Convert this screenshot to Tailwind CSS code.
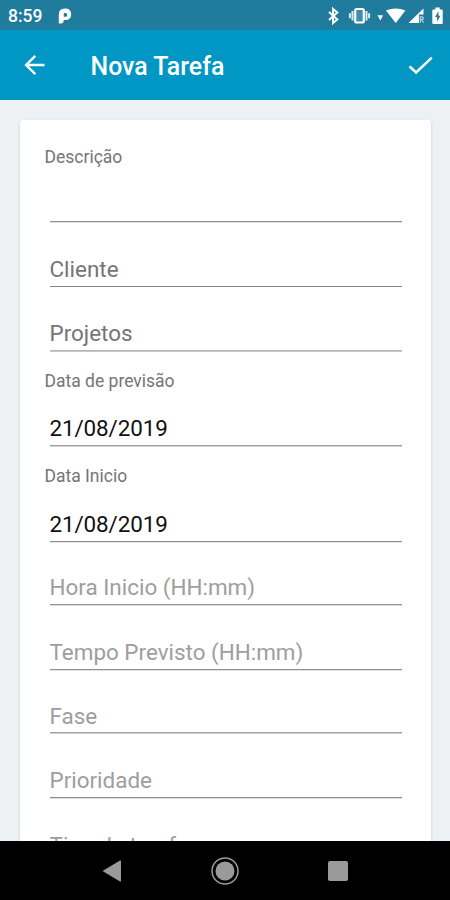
<!DOCTYPE html>
<html lang="pt">
<head>
<meta charset="utf-8">
<title>Nova Tarefa</title>
<script src="https://cdn.jsdelivr.net/npm/@tailwindcss/browser@4"></script>
</head>
<body class="h-[900px] w-[450px] overflow-hidden bg-black font-['Roboto',sans-serif]">
<div class="flex h-full flex-col">
  <div class="flex h-[30px] shrink-0 items-center bg-[#1f7c9c] pt-px pl-2 text-white">
    <span class="w-[50px] text-[17.5px] leading-5 font-medium">8:59</span>
    <svg class="h-4 w-[14px]" viewBox="0 0 14 16"><path fill="#fff" fill-rule="evenodd" d="M.8 15.500V6.800Q.8.500 7 .5Q13.200.5 13.200 6.200Q13.200 12 7.200 12H5.800Q5.600 15.500 3 15.500zM5.800 5V8.800H7.100Q9.300 8.800 9.300 6.900Q9.300 5 7.300 5z"/></svg>
    <svg class="ml-auto h-[30px] w-[130px]" viewBox="320 0 130 30" fill="#fff">
      <path d="M329 11l8.300 7.400-4.300 3.600V8l4.300 3.600L329 19" fill="none" stroke="#fff" stroke-width="2"/>
      <rect x="355.200" y="8" width="8.600" height="13.500" rx="1.500" fill="#fff" fill-opacity=".15" stroke="#fff" stroke-width="2.200"/>
      <path d="M352.500 10v9.500M366.500 10v9.500M349.900 12.300v5M369.100 12.300v5" stroke="#fff" stroke-opacity=".85" stroke-width="2"/>
      <path d="M377.500 14.200h5.600l-2.800 5.400z"/>
      <path d="M386 9.600q9.700-4.400 19.400 0L395.700 22z"/>
      <path d="M408.500 22L423.500 7.500v6h-4.500v8.500z"/>
      <path d="M420.300 21.800v-6h1.700q1.300 0 1.300 1.400t-1.300 1.400h-1.700M421.700 18.500l1.700 3.300" fill="none" stroke="#fff" stroke-opacity=".7" stroke-width="1.200"/>
      <path d="M435.300 6.600h4.400v1.800h2q1 0 1 1v12.500q0 1-1 1h-8.400q-1 0-1-1V9.400q0-1 1-1h2z"/>
      <path d="M438.500 10l-3.500 6h2.100v4.800l3.300-6h-1.900z" fill="#1f7c9c"/>
    </svg>
  </div>
  <header class="flex h-[70px] shrink-0 items-center bg-[#0197c5] pr-[17px] pl-6 text-white">
    <svg class="h-[22px] w-[22px]" viewBox="0 0 22 22" fill="none" stroke="#fff" stroke-width="2.400"><path d="M20.500 11H2.500M11.300 1.800L2.100 11l9.200 9.200"/></svg>
    <h1 class="ml-[44.500px] pt-[4px] text-[24.900px] leading-8 font-medium">Nova Tarefa</h1>
    <svg class="ml-auto h-5 w-[25px]" viewBox="0 0 25 20" fill="none" stroke="#fff" stroke-width="2.500"><path d="M1.500 11.300l6.600 6.200L23.800 2.700"/></svg>
  </header>
  <main class="h-[741px] shrink-0 overflow-hidden bg-[#edf1f4] pt-5 pr-[19px] pl-5">
    <form class="h-[760px] rounded-[4px] bg-white pr-[29px] pl-[29.500px] text-[22.450px] leading-[26px] text-[#757575] shadow-[0_1px_3px_rgba(0,0,0,0.16)]">
      <div class="flex h-[102px] flex-col border-b border-[#929292] pt-[27px] shadow-[0_1px_0_#dedede]">
        <label class="-ml-[5px] text-[17.500px] leading-5">Descrição</label>
      </div>
      <div class="flex h-[65px] items-end border-b border-[#858585] pb-[4px]">Cliente</div>
      <div class="flex h-[64px] items-end border-b border-[#b5b5b5] pb-[4px] shadow-[0_1px_0_#c8c8c8]">Projetos</div>
      <div class="flex h-[95px] flex-col justify-between border-b border-[#a0a0a0] pt-5 pb-[4px] shadow-[0_1px_0_#d0d0d0]">
        <label class="-ml-[5px] text-[17.500px] leading-5">Data de previsão</label>
        <span class="tracking-[-0.120px] text-[#111]">21/08/2019</span>
      </div>
      <div class="flex h-[96px] flex-col justify-between border-b border-[#8b8b8b] pt-5 pb-[4px] shadow-[0_1px_0_#e8e8e8]">
        <label class="-ml-[5px] text-[17.500px] leading-5">Data Inicio</label>
        <span class="tracking-[-0.120px] text-[#111]">21/08/2019</span>
      </div>
      <div class="flex h-[63px] items-end border-b border-[#929292] pb-[4px] text-[#9e9e9e] shadow-[0_1px_0_#dedede]">Hora Inicio (HH:mm)</div>
      <div class="flex h-[65px] items-end border-b border-[#929292] pb-[4px] text-[#9e9e9e] shadow-[0_1px_0_#e0e0e0]">Tempo Previsto (HH:mm)</div>
      <div class="flex h-[63px] items-end border-b border-[#a0a0a0] pb-[3px] text-[#9e9e9e] shadow-[0_1px_0_#d0d0d0]">Fase</div>
      <div class="flex h-[65px] items-end border-b border-[#8b8b8b] pb-[4px] text-[#9e9e9e] shadow-[0_1px_0_#e0e0e0]">Prioridade</div>
      <div class="flex h-[64px] items-end border-b border-[#929292] pb-[3px] text-[#9e9e9e]">Tipo de tarefa</div>
    </form>
  </main>
  <nav class="flex h-[59px] items-center justify-between bg-black pr-[102px] pl-[102px]">
    <svg class="h-[22px] w-5" viewBox="0 0 20 22" fill="#9a9a9a"><path d="M.5 11L18 .6q1-.4 1 .6v19.600q0 1-1 .6z"/></svg>
    <svg class="h-7 w-7" viewBox="0 0 28 28"><circle cx="14" cy="14" r="13" fill="none" stroke="#9a9a9a" stroke-width="1.500"/><circle cx="14" cy="14" r="9.500" fill="#9a9a9a"/></svg>
    <div class="h-5 w-5 rounded-[2px] bg-[#9a9a9a]"></div>
  </nav>
</div>
</body>
</html>
